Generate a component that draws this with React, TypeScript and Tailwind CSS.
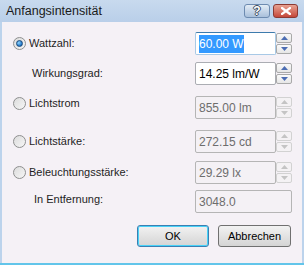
import React from "react";

const FONT = { fontFamily: '"Liberation Sans", Arial, sans-serif' };

function Radio({ checked }: { checked?: boolean }) {
  return (
    <span className="flex h-[13px] w-[13px] shrink-0 items-center justify-center rounded-full border border-[#8e8f8f] bg-gradient-to-br from-[#dcdcdc] to-[#f6f6f6]">
      {checked && (
        <span className="h-[7px] w-[7px] rounded-full border border-[#1c4a7a] bg-[radial-gradient(circle_at_35%_35%,#8fd5ff,#1d73c5_70%)]" />
      )}
    </span>
  );
}

function Arrow({ up, disabled }: { up?: boolean; disabled?: boolean }) {
  const c = disabled ? "#c4c4c4" : "#4d6db3";
  return (
    <svg width="7" height="4" viewBox="0 0 7 4">
      <path d={up ? "M0 4 L3.5 0 L7 4 Z" : "M0 0 L3.5 4 L7 0 Z"} fill={c} />
    </svg>
  );
}

function Spin({ disabled }: { disabled?: boolean }) {
  const box =
    "flex h-[10px] w-[16px] items-center justify-center rounded-[2px] border " +
    (disabled ? "border-[#d2d2d2] bg-[#f4f2f4]" : "border-[#a9a9a9] bg-gradient-to-b from-[#fafafa] to-[#e6e6e6]");
  return (
    <div className="flex flex-col gap-[1px] pt-[1px]">
      <div className={box}>
        <Arrow up disabled={disabled} />
      </div>
      <div className={box}>
        <Arrow disabled={disabled} />
      </div>
    </div>
  );
}

function Field({
  value,
  disabled,
  focused,
  spin = true,
}: {
  value: string;
  disabled?: boolean;
  focused?: boolean;
  spin?: boolean;
}) {
  const border = focused
    ? "border-[#a8c9e6] border-t-[#3d7bad]"
    : disabled
    ? "border-[#b5b5b5]"
    : "border-[#abadb3]";
  return (
    <div className="flex w-[97px] items-stretch">
      <div
        className={
          "flex h-[23px] items-center rounded-[2px] border px-[3px] text-[12px] " +
          border +
          (disabled ? " bg-[#f4f1f5] text-[#6d6d6d]" : " bg-white text-black") +
          (spin ? " w-[81px]" : " w-[97px]")
        }
      >
        {focused ? <span className="bg-[#3399ff] text-white">{value}</span> : value}
      </div>
      {spin && <Spin disabled={disabled} />}
    </div>
  );
}

function Row({
  children,
  field,
  top,
  labelShift = 0,
}: {
  children: React.ReactNode;
  field: React.ReactNode;
  top: string;
  labelShift?: number;
}) {
  return (
    <div className={"flex items-center justify-between " + top}>
      <div className="flex items-center gap-[3px] text-[11px] text-[#1e1e1e]" style={{ marginTop: labelShift }}>
        {children}
      </div>
      {field}
    </div>
  );
}

export default function App() {
  return (
    <div className="flex h-[265px] w-[304px] flex-col bg-[#bcd3ec]" style={FONT}>
      {/* title bar */}
      <div className="flex h-[22px] items-center justify-between bg-gradient-to-b from-[#c8daee] to-[#b9cfe9] pl-[6px] pr-[6px]">
        <span className="text-[12.5px] text-[#1a1a1a]">Anfangsintensität</span>
        <div className="flex gap-[3px]">
          <div className="flex h-[14px] w-[26px] items-center justify-center rounded-[3px] border border-[#6d8bb0] bg-gradient-to-b from-[#e3ecf6] to-[#a9c0db] text-[12px] font-bold leading-none text-white [text-shadow:1px_0_0_#3b4a5e,-1px_0_0_#3b4a5e,0_1px_0_#3b4a5e,0_-1px_0_#3b4a5e]">
            ?
          </div>
          <div className="flex h-[14px] w-[25px] items-center justify-center rounded-[3px] border border-[#8b3a33] bg-gradient-to-b from-[#e7a293] to-[#c4463a]">
            <svg width="10" height="8" viewBox="0 0 10 8">
              <path d="M1 1 L9 7 M9 1 L1 7" stroke="#fff" strokeWidth="2.2" strokeLinecap="square" />
            </svg>
          </div>
        </div>
      </div>

      {/* body */}
      <div className="ml-[2px] mr-[2px] flex flex-1 flex-col bg-[#f5f1f6] pl-[11px] pr-[10px] pt-[10px]">
        <Row top="" field={<Field value="60.00 W" focused />}>
          <Radio checked />
          <span>Wattzahl:</span>
        </Row>
        <Row top="mt-[7px]" field={<Field value="14.25 lm/W" />}>
          <span className="pl-[19px]">Wirkungsgrad:</span>
        </Row>
        <Row top="mt-[11px]" labelShift={-8} field={<Field value="855.00 lm" disabled />}>
          <Radio />
          <span>Lichtstrom</span>
        </Row>
        <Row top="mt-[11px]" field={<Field value="272.15 cd" disabled />}>
          <Radio />
          <span>Lichtstärke:</span>
        </Row>
        <Row top="mt-[8px]" field={<Field value="29.29 lx" disabled />}>
          <Radio />
          <span>Beleuchtungsstärke:</span>
        </Row>
        <Row top="mt-[6px]" labelShift={-5} field={<Field value="3048.0" disabled spin={false} />}>
          <span className="pl-[21px]">In Entfernung:</span>
        </Row>

        <div className="mt-[12px] flex justify-end gap-[9px] pr-[1px]">
          <button className="h-[22px] w-[72px] rounded-[3px] border border-[#3c7fb1] bg-gradient-to-b from-[#f2f2f2] to-[#d4d4d4] text-[11px] text-black shadow-[inset_0_0_0_1px_#48d2f8]">
            OK
          </button>
          <button className="h-[22px] w-[73px] rounded-[3px] border border-[#707070] bg-gradient-to-b from-[#f2f2f2] to-[#d4d4d4] text-[11px] text-black">
            Abbrechen
          </button>
        </div>
      </div>
      <div className="h-[2px] bg-[#62c5ea]" />
    </div>
  );
}
